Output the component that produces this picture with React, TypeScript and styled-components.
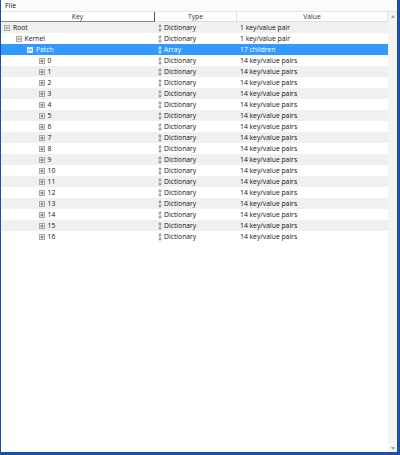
import styled, { createGlobalStyle } from "styled-components";

const GlobalStyle = createGlobalStyle`
  html, body {
    margin: 0;
    padding: 0;
    background: #1b4fa8;
    font-family: "Open Sans", "Noto Sans", sans-serif;
  }
`;

type Node = {
  key: string;
  depth: number;
  type: string;
  value: string;
  expanded?: boolean;
  selected?: boolean;
};

const rows: Node[] = [
  { key: "Root", depth: 0, type: "Dictionary", value: "1 key/value pair", expanded: true },
  { key: "Kernel", depth: 1, type: "Dictionary", value: "1 key/value pair", expanded: true },
  { key: "Patch", depth: 2, type: "Array", value: "17 children", expanded: true, selected: true },
  ...Array.from({ length: 17 }, (_, i) => ({
    key: String(i),
    depth: 3,
    type: "Dictionary",
    value: "14 key/value pairs",
  })),
];

function ExpandBox({ open, selected }: { open: boolean; selected?: boolean }) {
  if (selected) {
    return (
      <svg width="6" height="6" viewBox="0 0 6 6">
        <rect x="0" y="0" width="6" height="6" fill="#ffffff" opacity="0.85" />
        <rect x="1" y="2.5" width="4" height="1" fill="#3399ff" />
      </svg>
    );
  }
  return (
    <svg width="6" height="6" viewBox="0 0 6 6">
      <rect x="0.5" y="0.5" width="5" height="5" fill="#eeeeee" stroke="#a8a8a8" strokeWidth="1" />
      <rect x="1.5" y="2.5" width="3" height="1" fill="#6a6a6a" />
      {!open && <rect x="2.5" y="1.5" width="1" height="3" fill="#6a6a6a" />}
    </svg>
  );
}

function UpDown({ light }: { light?: boolean }) {
  const c = light ? "#d6e9ff" : "#9a9a9a";
  return (
    <svg width="4" height="8" viewBox="0 0 4 8">
      <path d="M2 0 L4 2.5 H0 Z" fill={c} />
      <rect x="1.5" y="2" width="1" height="4" fill={c} />
      <path d="M2 8 L4 5.5 H0 Z" fill={c} />
    </svg>
  );
}

export default function App() {
  return (
    <>
      <GlobalStyle />
      <Window>
        <MenuBar>
          <MenuItem>File</MenuItem>
        </MenuBar>
        <Body>
          <TreeArea>
            <HeaderRow>
              <HeaderCell $active>Key</HeaderCell>
              <HeaderCell>Type</HeaderCell>
              <HeaderCell>Value</HeaderCell>
            </HeaderRow>
            {rows.map((r, i) => (
              <Row key={i} $striped={i % 2 === 0} $selected={r.selected}>
                <KeyCell $depth={r.depth}>
                  <ExpandBox open={!!r.expanded} selected={r.selected} />
                  <span>{r.key}</span>
                </KeyCell>
                <TypeCell>
                  <UpDown light={r.selected} />
                  <span>{r.type}</span>
                </TypeCell>
                <ValueCell>{r.value}</ValueCell>
              </Row>
            ))}
          </TreeArea>
          <ScrollBar>
            <ArrowUp />
            <ArrowDown />
          </ScrollBar>
        </Body>
      </Window>
    </>
  );
}

const Window = styled.div`
  margin-left: 1px;
  width: 396px;
  height: 452px;
  background: #ffffff;
  display: flex;
  flex-direction: column;
  color: #111;
`;

const MenuBar = styled.div`
  height: 11px;
  display: flex;
  align-items: center;
  padding-left: 4px;
  background: #fbfbfb;
`;

const MenuItem = styled.span`
  font-size: 7px;
  line-height: 11px;
`;

const Body = styled.div`
  flex: 1;
  display: flex;
  border-top: 1px solid #e4e4e4;
`;

const TreeArea = styled.div`
  flex: 1;
  display: flex;
  flex-direction: column;
`;

const HeaderRow = styled.div`
  display: grid;
  grid-template-columns: 154px 82px 1fr;
  height: 9px;
  border-bottom: 1px solid #e0e0e0;
`;

const HeaderCell = styled.div<{ $active?: boolean }>`
  font-size: 6.8px;
  line-height: 9px;
  text-align: center;
  color: #333;
  border-right: 1px solid ${(p) => (p.$active ? "#555" : "#e0e0e0")};
  border-bottom: ${(p) => (p.$active ? "1px solid #888" : "none")};
`;

const Row = styled.div<{ $striped: boolean; $selected?: boolean }>`
  display: grid;
  grid-template-columns: 154px 82px 1fr;
  height: 11px;
  align-items: center;
  font-size: 6.8px;
  background: ${(p) => (p.$selected ? "#3399ff" : p.$striped ? "#f0f0f0" : "#ffffff")};
  color: ${(p) => (p.$selected ? "#ffffff" : "#111")};
`;

const KeyCell = styled.div<{ $depth: number }>`
  display: flex;
  align-items: center;
  gap: 3px;
  padding-left: ${(p) => 3 + p.$depth * 11.5}px;
`;

const TypeCell = styled.div`
  display: flex;
  align-items: center;
  gap: 2px;
  padding-left: 3px;
`;

const ValueCell = styled.div`
  padding-left: 3px;
`;

const ScrollBar = styled.div`
  width: 9px;
  background: #f4f4f4;
  display: flex;
  flex-direction: column;
  justify-content: space-between;
  align-items: center;
  padding: 3px 0 2px;
`;

const ArrowUp = styled.div`
  width: 0;
  height: 0;
  border-left: 2px solid transparent;
  border-right: 2px solid transparent;
  border-bottom: 3px solid #a0a0a0;
`;

const ArrowDown = styled.div`
  width: 0;
  height: 0;
  border-left: 2px solid transparent;
  border-right: 2px solid transparent;
  border-top: 3px solid #a0a0a0;
`;
